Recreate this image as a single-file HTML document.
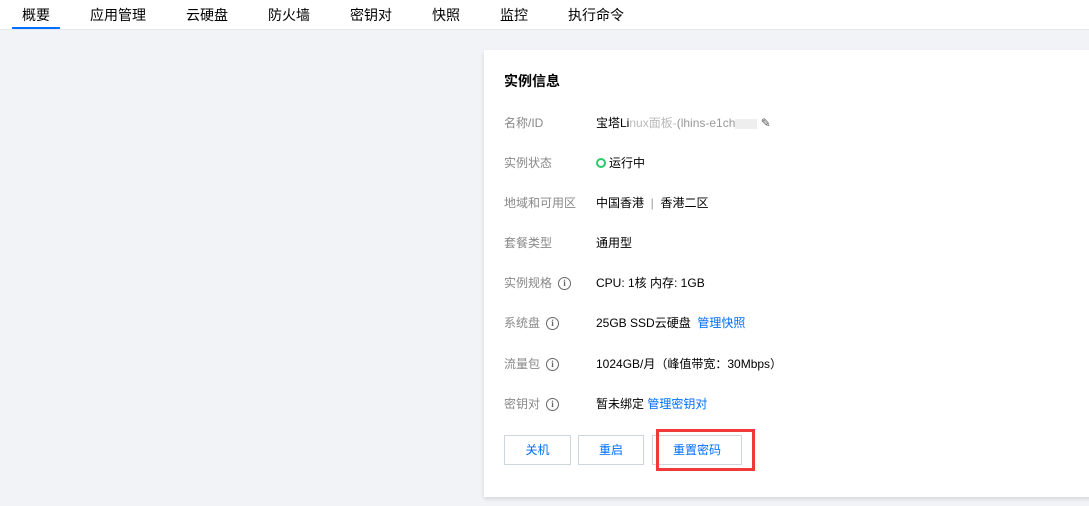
<!DOCTYPE html>
<html><head><meta charset="utf-8"><style>
*{margin:0;padding:0;box-sizing:border-box}
body{width:1089px;height:506px;overflow:hidden;background:#f2f3f7;font-family:"Liberation Sans","Noto Sans CJK SC",sans-serif;font-size:12px;color:#000;position:relative}
.tabs{position:absolute;left:0;top:0;width:1089px;height:30px;background:#fff;border-bottom:1px solid #e5e7ec}
.tab{position:absolute;top:6px;font-size:14px;color:#000;line-height:18px}
.ul{position:absolute;left:12px;top:27px;width:48px;height:2px;background:#006eff}
.card{position:absolute;left:484px;top:50px;width:620px;height:447px;background:#fff;box-shadow:0 2px 4px rgba(0,0,0,.12)}
.title{position:absolute;left:20px;top:21px;font-size:14px;font-weight:bold}
.lab{position:absolute;left:20px;color:#888;font-size:12px;line-height:16px;display:flex;align-items:center}
.val{position:absolute;left:112px;color:#000;font-size:12px;line-height:16px}
.lnk{color:#006eff}
.i{display:inline-block;width:13px;height:13px;border:1.5px solid #666;border-radius:50%;font-size:9px;line-height:10px;text-align:center;color:#666;font-weight:bold;margin-left:6px;font-family:"Liberation Serif",serif}
.btn{position:absolute;top:385px;height:30px;border:1px solid #cfd5de;background:#fff;color:#006eff;font-size:12px;text-align:center;line-height:28px}
.red{position:absolute;left:656px;top:429px;width:99px;height:42px;border:3px solid #f03a3a}
</style></head><body>
<div class="tabs">
<span class="tab" style="left:22px">概要</span>
<span class="tab" style="left:90px">应用管理</span>
<span class="tab" style="left:186px">云硬盘</span>
<span class="tab" style="left:268px">防火墙</span>
<span class="tab" style="left:350px">密钥对</span>
<span class="tab" style="left:432px">快照</span>
<span class="tab" style="left:500px">监控</span>
<span class="tab" style="left:568px">执行命令</span>
<div class="ul"></div>
</div>
<div class="card">
<div class="title">实例信息</div>
<div class="lab" style="top:65px">名称/ID</div>
<div class="val" style="top:65px">宝塔Li<span style="color:#bbb">nux面板-</span><span style="color:#999">(lhins-e1ch</span><span style="display:inline-block;width:22px;height:10px;background:#eee;vertical-align:middle"></span> <span style="color:#555">✎</span></div>
<div class="lab" style="top:105px">实例状态</div>
<div class="val" style="top:105px"><span style="display:inline-block;width:10px;height:10px;border:2px solid #29cc6a;border-radius:50%;vertical-align:-1px;margin-right:3px"></span>运行中</div>
<div class="lab" style="top:145px">地域和可用区</div>
<div class="val" style="top:145px">中国香港 &nbsp;<span style="color:#999">|</span>&nbsp; 香港二区</div>
<div class="lab" style="top:185px">套餐类型</div>
<div class="val" style="top:185px">通用型</div>
<div class="lab" style="top:225px">实例规格<span class="i">i</span></div>
<div class="val" style="top:225px">CPU: 1核 内存: 1GB</div>
<div class="lab" style="top:265px">系统盘<span class="i">i</span></div>
<div class="val" style="top:265px">25GB SSD云硬盘 &nbsp;<span class="lnk">管理快照</span></div>
<div class="lab" style="top:306px">流量包<span class="i">i</span></div>
<div class="val" style="top:306px">1024GB/月（峰值带宽：30Mbps）</div>
<div class="lab" style="top:346px">密钥对<span class="i">i</span></div>
<div class="val" style="top:346px">暂未绑定 <span class="lnk">管理密钥对</span></div>
<div class="btn" style="left:20px;width:67px">关机</div>
<div class="btn" style="left:94px;width:66px">重启</div>
<div class="btn" style="left:168px;width:90px">重置密码</div>
</div>
<div class="red"></div>
</body></html>
